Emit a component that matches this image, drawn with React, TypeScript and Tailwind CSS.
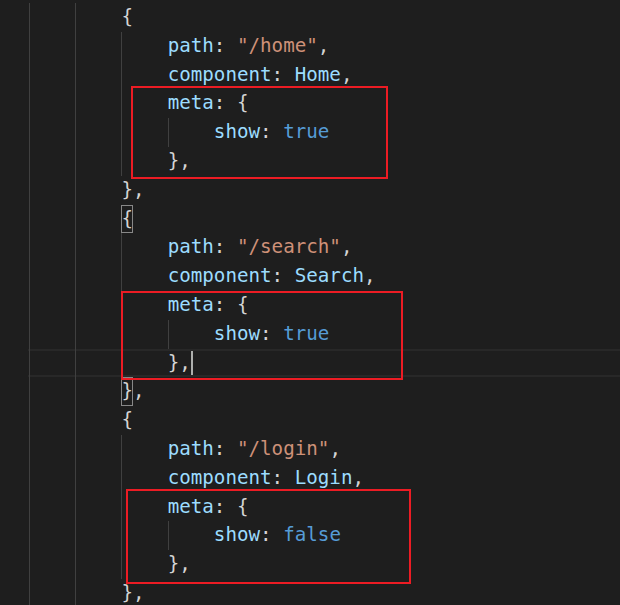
import React from "react";

type Tok = { t: string; c: string };
type Line = { indent: number; toks: Tok[]; guides: number[]; bracket?: boolean; current?: boolean; cursor?: number };

const P = "text-[#d4d4d4]";
const K = "text-[#9cdcfe]";
const S = "text-[#ce9178]";
const B = "text-[#569cd6]";

const block = (path: string, comp: string, show: string, opts: { openBracket?: boolean; closeBracket?: boolean; currentMetaClose?: boolean }): Line[] => [
  { indent: 8, toks: [{ t: "{", c: P }], guides: [0, 4], bracket: opts.openBracket },
  { indent: 12, toks: [{ t: "path", c: K }, { t: ": ", c: P }, { t: `"${path}"`, c: S }, { t: ",", c: P }], guides: [0, 4, 8] },
  { indent: 12, toks: [{ t: "component", c: K }, { t: ": ", c: P }, { t: comp, c: K }, { t: ",", c: P }], guides: [0, 4, 8] },
  { indent: 12, toks: [{ t: "meta", c: K }, { t: ": {", c: P }], guides: [0, 4, 8] },
  { indent: 16, toks: [{ t: "show", c: K }, { t: ": ", c: P }, { t: show, c: B }], guides: [0, 4, 8, 12] },
  { indent: 12, toks: [{ t: "},", c: P }], guides: [0, 4, 8], current: opts.currentMetaClose, cursor: opts.currentMetaClose ? 14 : undefined },
  { indent: 8, toks: [{ t: "},", c: P }], guides: [0, 4], bracket: opts.closeBracket },
];

const lines: Line[] = [
  ...block("/home", "Home", "true", {}),
  ...block("/search", "Search", "true", { openBracket: true, closeBracket: true, currentMetaClose: true }),
  ...block("/login", "Login", "false", {}),
];

const guideLeft: Record<number, string> = {
  0: "left-[0ch]",
  4: "left-[4ch]",
  8: "left-[8ch]",
  12: "left-[12ch]",
};

function CodeLine({ line }: { line: Line }) {
  const pad = " ".repeat(line.indent);
  return (
    <div className="relative h-[28.8px] leading-[28.8px] whitespace-pre">
      {line.current && (
        <span className="absolute -left-px right-0 top-0 bottom-0 border-y-2 border-[#282828]" />
      )}
      {line.guides.map((g) => (
        <span key={g} className={`absolute top-0 bottom-0 w-px bg-[#404040] ${guideLeft[g]}`} />
      ))}
      <span className="relative">
        {pad}
        {line.toks.map((tk, i) =>
          i === 0 && line.bracket ? (
            <React.Fragment key={i}>
              <span className={`inline-block h-[28.8px] align-top shadow-[inset_0_0_0_1px_#888888] ${tk.c}`}>{tk.t[0]}</span>
              <span className={tk.c}>{tk.t.slice(1)}</span>
            </React.Fragment>
          ) : (
            <span key={i} className={tk.c}>
              {tk.t}
            </span>
          )
        )}
      </span>
      {line.cursor !== undefined && (
        <span className="absolute left-[14ch] top-[2px] bottom-[2px] w-[2px] bg-[#aeafad]" />
      )}
    </div>
  );
}

export default function App() {
  return (
    <div className="relative w-[620px] h-[605px] overflow-hidden bg-[#1e1e1e]">
      <div className="pt-[3px] pl-[29px] text-[19.2px] [font-family:'DejaVu_Sans_Mono',monospace]">
        {lines.map((l, i) => (
          <CodeLine key={i} line={l} />
        ))}
      </div>
      <div className="absolute left-[131px] top-[86px] w-[257px] h-[93px] border-2 border-[#ec1c24]" />
      <div className="absolute left-[121px] top-[291px] w-[282px] h-[89px] border-2 border-[#ec1c24]" />
      <div className="absolute left-[126px] top-[489px] w-[285px] h-[95px] border-2 border-[#ec1c24]" />
    </div>
  );
}
